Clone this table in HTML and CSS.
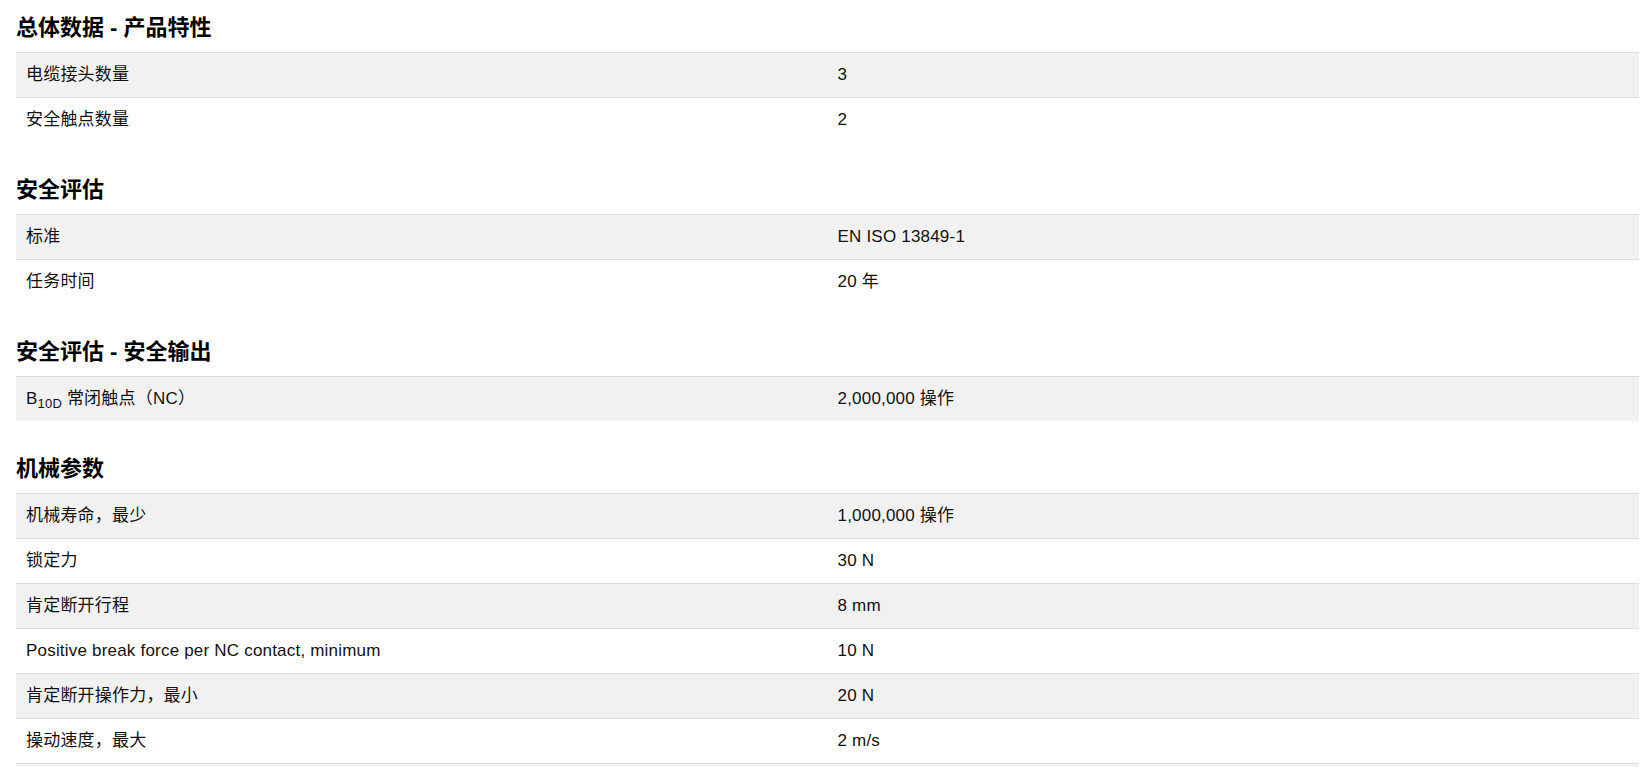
FILE: index.html
```html
<!DOCTYPE html>
<html lang="zh-CN">
  <head>
    <meta charset="UTF-8" />
    <meta name="viewport" content="width=device-width, initial-scale=1.0" />
    <title>技术数据</title>
    <link rel="stylesheet" href="styles.css">
  </head>
  <body>
    <div class="specs">
      <section class="spec-group">
        <h2>总体数据 - 产品特性</h2>
        <div class="spec-table">
          <div class="spec-row">
            <div class="spec-label">电缆接头数量</div>
            <div class="spec-value">3</div>
          </div>
          <div class="spec-row">
            <div class="spec-label">安全触点数量</div>
            <div class="spec-value">2</div>
          </div>
        </div>
      </section>

      <section class="spec-group">
        <h2>安全评估</h2>
        <div class="spec-table">
          <div class="spec-row">
            <div class="spec-label">标准</div>
            <div class="spec-value">EN ISO 13849-1</div>
          </div>
          <div class="spec-row">
            <div class="spec-label">任务时间</div>
            <div class="spec-value">20 年</div>
          </div>
        </div>
      </section>

      <section class="spec-group">
        <h2>安全评估 - 安全输出</h2>
        <div class="spec-table">
          <div class="spec-row">
            <div class="spec-label">B<sub>10D</sub> 常闭触点（NC）</div>
            <div class="spec-value">2,000,000 操作</div>
          </div>
        </div>
      </section>

      <section class="spec-group">
        <h2>机械参数</h2>
        <div class="spec-table">
          <div class="spec-row">
            <div class="spec-label">机械寿命，最少</div>
            <div class="spec-value">1,000,000 操作</div>
          </div>
          <div class="spec-row">
            <div class="spec-label">锁定力</div>
            <div class="spec-value">30 N</div>
          </div>
          <div class="spec-row">
            <div class="spec-label">肯定断开行程</div>
            <div class="spec-value">8 mm</div>
          </div>
          <div class="spec-row">
            <div class="spec-label">Positive break force per NC contact, minimum</div>
            <div class="spec-value">10 N</div>
          </div>
          <div class="spec-row">
            <div class="spec-label">肯定断开操作力，最小</div>
            <div class="spec-value">20 N</div>
          </div>
          <div class="spec-row">
            <div class="spec-label">操动速度，最大</div>
            <div class="spec-value">2 m/s</div>
          </div>
          <div class="spec-row">
            <div class="spec-label"></div>
            <div class="spec-value"></div>
          </div>
        </div>
      </section>
    </div>
  </body>
</html>
```

FILE: styles.css
```css
body {
  margin: 0;
  padding: 0;
  background-color: #ffffff;
  color: #111111;
  font-family: "Liberation Sans", "Noto Sans CJK SC", Arial, sans-serif;
  font-size: 17px;
  letter-spacing: 0.2px;
}

.specs {
  padding: 14px 5px 0 16px;
}

.spec-group {
  margin-bottom: 34px;
}

.spec-group h2 {
  margin: 0 0 10px 0;
  font-size: 22px;
  line-height: 28px;
  font-weight: bold;
  letter-spacing: 0;
  color: #000000;
}

.spec-row {
  display: grid;
  grid-template-columns: 1fr 1fr;
  align-items: center;
  min-height: 44px;
  border-top: 1px solid #dcdcdc;
}

.spec-row:nth-child(odd) {
  background-color: #f1f1f1;
}

.spec-label,
.spec-value {
  padding: 0 10px;
  line-height: 22px;
}

.spec-label sub {
  font-size: 13px;
  line-height: 0;
  vertical-align: -4px;
}
```
